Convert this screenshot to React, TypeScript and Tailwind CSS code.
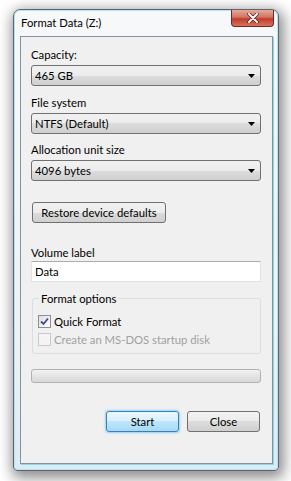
import React from 'react';

const font = { fontFamily: 'Lato, "Noto Sans", sans-serif' };

function Combo({ value }: { value: string }) {
  return (
    <div className="ml-[10px] mt-[3px] flex h-[21px] w-[230px] items-center justify-between rounded-[3px] border border-[#707070] bg-[linear-gradient(#f2f2f2_0%,#ebebeb_50%,#dddddd_50%,#cfcfcf_100%)] pl-[3px] pr-[5px]">
      <span className="leading-none">{value}</span>
      <svg width="7" height="4" viewBox="0 0 7 4">
        <path d="M0 0h7L3.5 4z" fill="#000" />
      </svg>
    </div>
  );
}

function Label({ children, mt }: { children: React.ReactNode; mt: string }) {
  return <div className={`ml-[10px] h-[15px] leading-[15px] ${mt}`}>{children}</div>;
}

function Check({ checked, disabled }: { checked?: boolean; disabled?: boolean }) {
  return (
    <div
      className={`flex h-[13px] w-[13px] items-center justify-center border ${
        disabled ? 'border-[#c9c9c9] bg-[#f4f4f4]' : 'border-[#8e8f8f] bg-[linear-gradient(135deg,#dcdcdc,#ffffff)]'
      }`}
    >
      {checked && (
        <svg width="9" height="9" viewBox="0 0 9 9">
          <path d="M1 4.5l2.5 2.5L8 1.5" stroke="#3b4f8c" strokeWidth="1.8" fill="none" />
        </svg>
      )}
    </div>
  );
}

export default function App() {
  return (
    <div className="h-[481px] w-[291px] bg-white pl-[13px] pt-[9px] text-[11.3px] text-black" style={font}>
      <div className="flex h-[462px] w-[266px] flex-col rounded-t-[7px] rounded-b-[4px] border border-[#5b6670] bg-[linear-gradient(#f7f8f9,#eef2f4_70%,#dcecf2)] shadow-[2px_4px_14px_3px_rgba(0,0,0,0.45),inset_0_0_0_1px_#b5e3f1]">
        {/* title bar */}
        <div className="flex h-[26px] items-start justify-between pl-[7px] pr-[4px]">
          <span className="mt-[5px] leading-[15px]">Format Data (Z:)</span>
          <div className="flex h-[17px] w-[43px] items-center justify-center rounded-b-[4px] border border-t-0 border-[#6d2a25] bg-[linear-gradient(#e8a897_0%,#d27563_45%,#c23c2b_55%,#d8735e_100%)]">
            <svg width="12" height="10" viewBox="0 0 12 10">
              <path d="M2 1l8 8M10 1L2 9" stroke="#5a1a14" strokeWidth="3.4" strokeLinecap="round" />
              <path d="M2 1l8 8M10 1L2 9" stroke="#fff" strokeWidth="2" strokeLinecap="round" />
            </svg>
          </div>
        </div>

        {/* client area */}
        <div className="ml-[6px] mr-[5px] flex h-[428px] flex-col border border-[#84929e] bg-[#f0f0f0] shadow-[1px_1px_0_#8ad7ee]">
          <Label mt="mt-[10px]">Capacity:</Label>
          <Combo value="465 GB" />
          <Label mt="mt-[9px]">File system</Label>
          <Combo value="NTFS (Default)" />
          <Label mt="mt-[8px]">Allocation unit size</Label>
          <Combo value="4096 bytes" />

          <button className="ml-[11px] mt-[21px] flex h-[21px] w-[134px] items-center justify-center rounded-[3px] border border-[#707070] bg-[linear-gradient(#f2f2f2_0%,#ebebeb_50%,#dddddd_50%,#cfcfcf_100%)] leading-none">
            Restore device defaults
          </button>

          <Label mt="mt-[22px]">Volume label</Label>
          <div className="ml-[10px] mt-[1px] flex h-[21px] w-[230px] items-center border border-[#dfe3e8] border-t-[#abadb3] bg-white pl-[3px] leading-none">
            Data
          </div>

          {/* group box */}
          <div className="relative ml-[11px] mt-[16px] h-[56px] w-[229px] rounded-[3px] border border-[#d5dfe5]">
            <span className="absolute -top-[8px] left-[6px] bg-[#f0f0f0] px-[2px] leading-[15px]">Format options</span>
            <div className="ml-[5px] mt-[16px] flex items-center gap-[3px]">
              <Check checked />
              <span className="leading-[13px]">Quick Format</span>
            </div>
            <div className="ml-[5px] mt-[5px] flex items-center gap-[3px] text-[#a0a0a0]">
              <Check disabled />
              <span className="leading-[13px]">Create an MS-DOS startup disk</span>
            </div>
          </div>

          {/* progress */}
          <div className="ml-[10px] mt-[15px] h-[14px] w-[230px] rounded-[3px] border border-[#b2b2b2] bg-[linear-gradient(#f3f3f3,#e4e4e4_50%,#d9d9d9)]" />

          <div className="mt-[28px] flex justify-end gap-[8px] pr-[12px]">
            <button className="flex h-[21px] w-[73px] items-center justify-center rounded-[3px] border border-[#3c7fb1] bg-[linear-gradient(#eaf6fd_0%,#d9f0fc_50%,#bee6fd_50%,#a7d9f5_100%)] leading-none shadow-[0_0_2px_1px_#8fd3f5]">
              Start
            </button>
            <button className="flex h-[21px] w-[73px] items-center justify-center rounded-[3px] border border-[#707070] bg-[linear-gradient(#f2f2f2_0%,#ebebeb_50%,#dddddd_50%,#cfcfcf_100%)] leading-none">
              Close
            </button>
          </div>
        </div>
      </div>
    </div>
  );
}
